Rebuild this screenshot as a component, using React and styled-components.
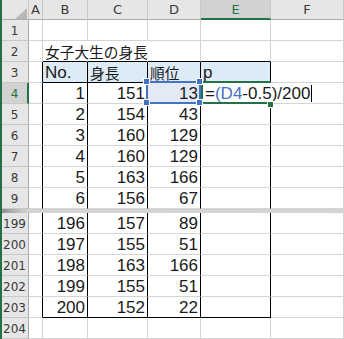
import React from 'react';
import styled, { createGlobalStyle } from 'styled-components';

const GREEN = '#217346';
const BLUE = '#4472C4';
const GRID = '#D4D4D4';
const HEAD_BG = '#E6E6E6';
const HEAD_SEL = '#D2D2D2';
const HEAD_LINE = '#C8C8C8';
const HEAD_EDGE = '#ABABAB';
const BLACK = '#000000';
const TITLE_BG = '#DDEBF7';
const REF_BG = '#E3EAF6';

const COLS = '27px 14px 45px 60px 53px 70px 73px';
const LETTERS = ['A', 'B', 'C', 'D', 'E', 'F'];

const Global = createGlobalStyle`
  html, body { margin: 0; padding: 0; background: #ffffff; overflow: hidden; }
  *, *::before, *::after { box-sizing: border-box; }
`;

const Sheet = styled.div`
  width: 344px;
  height: 339px;
  border-left: 2px solid ${GREEN};
  display: flex;
  flex-direction: column;
  font-family: "Liberation Sans", Arial, sans-serif;
  color: #1a1a1a;
  overflow: hidden;
  background: #fff;
`;

const Row = styled.div`
  display: grid;
  grid-template-columns: ${COLS};
  height: ${(p) => p.$h}px;
  flex: none;
`;

const Corner = styled.div`
  background: ${HEAD_BG};
  border-right: 1px solid ${HEAD_LINE};
  border-bottom: 1px solid ${HEAD_EDGE};
  display: flex;
  align-items: flex-end;
  justify-content: flex-end;
  padding: 0 1px 0 0;
`;

const ColHead = styled.div`
  background: ${(p) => (p.$sel ? HEAD_SEL : HEAD_BG)};
  color: ${(p) => (p.$sel ? GREEN : '#3a3a3a')};
  border-right: 1px solid ${HEAD_LINE};
  border-bottom: ${(p) => (p.$sel ? `2px solid ${GREEN}` : `1px solid ${HEAD_EDGE}`)};
  display: flex;
  align-items: center;
  justify-content: center;
  font-family: "DejaVu Sans", sans-serif;
  font-size: 13px;
  line-height: 15px;
  padding-top: ${(p) => (p.$sel ? 1 : 0)}px;
`;

const RowHead = styled.div`
  background: ${(p) => (p.$sel ? HEAD_SEL : HEAD_BG)};
  color: ${(p) => (p.$sel ? GREEN : '#3a3a3a')};
  border-right: ${(p) => (p.$sel ? `2px solid ${GREEN}` : `1px solid ${HEAD_EDGE}`)};
  border-bottom: 1px solid ${HEAD_LINE};
  display: flex;
  align-items: center;
  justify-content: center;
  font-family: "DejaVu Sans", sans-serif;
  font-size: 12px;
  line-height: 14px;
  padding: 2px ${(p) => (p.$sel ? 0 : 1)}px 0 0;
`;

const Cell = styled.div`
  position: relative;
  z-index: ${(p) => p.$z || 'auto'};
  display: flex;
  align-items: flex-end;
  justify-content: ${(p) => (p.$right ? 'flex-end' : 'flex-start')};
  padding: 0 2px 0 2px;
  min-width: 0;
  background: ${(p) => p.$bg || 'transparent'};
  border-right: 1px solid ${(p) => p.$r};
  border-bottom: 1px solid ${(p) => p.$b};
  font-size: 17px;
  line-height: 19px;
  white-space: nowrap;
`;

const Jp = styled.span`
  font-family: "Noto Sans CJK JP", sans-serif;
  font-size: 14.7px;
`;

const Ref = styled.span`
  color: ${BLUE};
`;

const Formula = styled.span`
  padding-left: 2px;
`;

const Caret = styled.span`
  display: inline-block;
  width: 1px;
  height: 17px;
  background: #000;
  margin-left: 1px;
  vertical-align: -3px;
`;

const RefFrame = styled.div`
  position: absolute;
  top: -2px;
  left: -2px;
  width: 55px;
  height: 23px;
  border: 2px solid ${BLUE};
  pointer-events: none;
`;

const Handle = styled.span`
  position: absolute;
  width: ${(p) => p.$s}px;
  height: ${(p) => p.$s}px;
  background: ${(p) => p.$c};
  outline: 1px solid #fff;
`;

const EditFrame = styled.div`
  position: absolute;
  top: -2px;
  left: 0;
  width: 70px;
  height: 23px;
  border-top: 2px solid ${GREEN};
  border-left: 2px solid ${GREEN};
  border-bottom: 2px solid ${GREEN};
  pointer-events: none;
`;

const Split = styled.div`
  flex: none;
  height: 4px;
  background: linear-gradient(to right, #8f8f8f 0px, #c4c4c4 18px, #d2d2d2 27px, #d4d4d4 100%);
`;

const top = [
  { n: 1 },
  { n: 2, title: '女子大生の身長' },
  { n: 3, head: true },
  { n: 4, v: [1, 151, 13], sel: true },
  { n: 5, v: [2, 154, 43] },
  { n: 6, v: [3, 160, 129] },
  { n: 7, v: [4, 160, 129] },
  { n: 8, v: [5, 163, 166] },
  { n: 9, v: [6, 156, 67] },
];

const bottom = [
  { n: 199, v: [196, 157, 89] },
  { n: 200, v: [197, 155, 51] },
  { n: 201, v: [198, 163, 166] },
  { n: 202, v: [199, 155, 51] },
  { n: 203, v: [200, 152, 22] },
  { n: 204 },
];

function cellContent(row, ci) {
  if (row.title && ci === 1) return <Jp>{row.title}</Jp>;
  if (row.head) {
    if (ci === 1) return 'No.';
    if (ci === 2) return <Jp>身長</Jp>;
    if (ci === 3) return <Jp>順位</Jp>;
    if (ci === 4) return 'p';
  }
  if (row.v && ci >= 1 && ci <= 3) return row.v[ci - 1];
  return null;
}

function SheetRow({ row }) {
  const { n } = row;
  const inTable = n >= 3 && n <= 203;
  return (
    <Row $h={21}>
      <RowHead $sel={row.sel}>{n}</RowHead>
      {LETTERS.map((L, i) => {
        let r = inTable && i <= 4 ? BLACK : GRID;
        const b = i >= 1 && i <= 4 && (n === 2 || n === 3 || n === 203) ? BLACK : GRID;
        if (row.title && (i === 1 || i === 2)) r = 'transparent';
        let bg;
        if (row.head && i >= 1 && i <= 4) bg = TITLE_BG;
        const isRef = row.sel && i === 3;
        const isEdit = row.sel && i === 4;
        if (isRef) bg = REF_BG;
        if (isEdit) r = 'transparent';
        return (
          <Cell
            key={L}
            $r={r}
            $b={b}
            $bg={bg}
            $right={!!row.v && i >= 1 && i <= 3}
            $z={isRef ? 2 : isEdit ? 1 : undefined}
          >
            {cellContent(row, i)}
            {isRef && (
              <>
                <RefFrame />
                <Handle $c={BLUE} $s={5} style={{ left: -4, top: -4 }} />
                <Handle $c={BLUE} $s={5} style={{ left: 49, top: -4 }} />
                <Handle $c={BLUE} $s={5} style={{ left: -4, top: 17 }} />
                <Handle $c={BLUE} $s={5} style={{ left: 49, top: 17 }} />
              </>
            )}
            {isEdit && (
              <>
                <Formula>
                  =<Ref>(D4</Ref>-0.5)/200
                  <Caret />
                </Formula>
                <EditFrame />
                <Handle $c={GREEN} $s={5} style={{ left: 67, top: 19 }} />
              </>
            )}
          </Cell>
        );
      })}
    </Row>
  );
}

function CornerMark() {
  return (
    <svg width="12" height="11" viewBox="0 0 12 11" aria-hidden="true">
      <polygon points="12,0 12,11 0,11" fill="#B8B8B8" />
    </svg>
  );
}

export default function App() {
  return (
    <>
      <Global />
      <Sheet>
        <Row $h={20}>
          <Corner>
            <CornerMark />
          </Corner>
          {LETTERS.map((L) => (
            <ColHead key={L} $sel={L === 'E'}>
              {L}
            </ColHead>
          ))}
        </Row>
        {top.map((row) => (
          <SheetRow key={row.n} row={row} />
        ))}
        <Split />
        {bottom.map((row) => (
          <SheetRow key={row.n} row={row} />
        ))}
      </Sheet>
    </>
  );
}
